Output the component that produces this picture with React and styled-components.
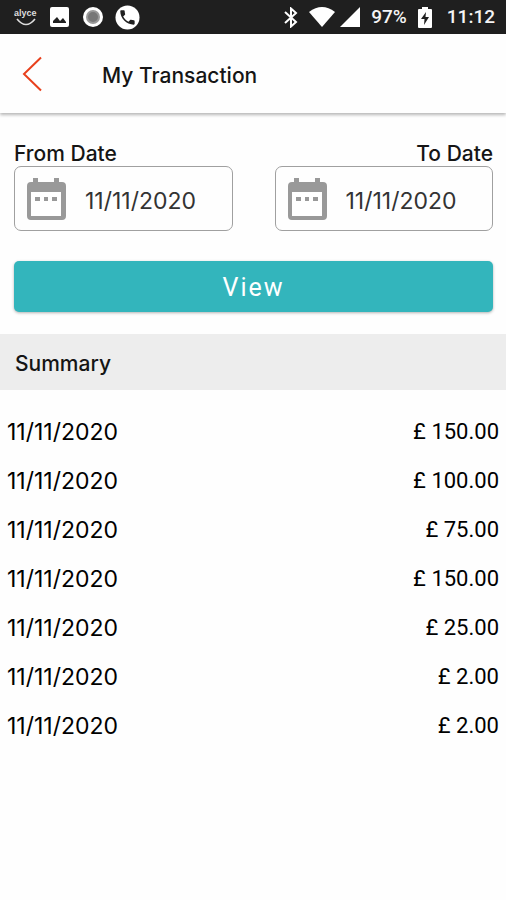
import React from "react";
import styled, { createGlobalStyle } from "styled-components";

const GlobalStyle = createGlobalStyle`
  * { box-sizing: border-box; }
  body { margin: 0; background: #fefefe; color: #151515; font-family: Inter, sans-serif; }
`;

const Screen = styled.div`
  min-height: 100vh;
  background: #fefefe;
`;

const StatusBar = styled.div`
  display: flex;
  align-items: center;
  justify-content: space-between;
  height: 34px;
  padding: 0 11px 0 14px;
  background: #1f1f1f;
  color: #f4f4f4;
  font: 500 19px/34px Roboto, sans-serif;
`;

const StatusGroup = styled.div`
  display: flex;
  align-items: center;
  gap: ${(p) => p.$gap}px;
`;

const Clock = styled.time`
  margin-left: 4px;
`;

const Glyph = styled.svg`
  display: block;
  flex: none;
`;

const Header = styled.header`
  display: flex;
  align-items: center;
  gap: 56px;
  height: 79px;
  padding: 0 20px;
  background: #fefefe;
  box-shadow: 0 2px 3px rgba(0, 0, 0, 0.28);
`;

const BackButton = styled.button`
  padding: 0;
  border: 0;
  background: none;
  cursor: pointer;
`;

const Title = styled.h1`
  margin: 0;
  padding-top: 4px;
  font-size: 21px;
  font-weight: 500;
  line-height: 24px;
`;

const Filters = styled.form`
  display: grid;
  grid-template-columns: 1fr 1fr;
  gap: 30px 42px;
  padding: 28px 13px 22px 14px;
`;

const Field = styled.label`
  display: flex;
  flex-direction: column;
  min-width: 0;
  font-size: 21px;
  font-weight: 500;
  line-height: 25px;
  text-align: ${(p) => p.$align};
`;

const DateBox = styled.span`
  display: flex;
  align-items: center;
  gap: 19px;
  height: 65px;
  padding: 0 12px;
  border: 1px solid #a0a0a0;
  border-radius: 7px;
`;

const DateInput = styled.input`
  flex: 1;
  min-width: 0;
  width: 100%;
  padding: 4px 0 0;
  border: 0;
  outline: 0;
  background: none;
  color: #333;
  font: 400 23px/28px Inter, sans-serif;
`;

const ViewButton = styled.button`
  grid-column: 1 / -1;
  height: 51px;
  padding: 3px 0 0;
  border: 0;
  border-radius: 5px;
  background: #33b5bc;
  box-shadow: 0 1px 3px rgba(0, 0, 0, 0.3);
  color: #fff;
  font: 400 25px/30px Roboto, sans-serif;
  letter-spacing: 2px;
  cursor: pointer;
`;

const SectionTitle = styled.h2`
  margin: 0;
  padding: 18px 15px 14px;
  background: #ededed;
  font-size: 21px;
  font-weight: 500;
  line-height: 24px;
`;

const Transactions = styled.table`
  width: 100%;
  margin-top: 17px;
  border-collapse: collapse;
`;

const Cell = styled.td`
  height: 49px;
  padding: 0 7px;
  color: #000;
  font-weight: 400;
  line-height: 28px;
`;

const DateCell = styled(Cell)`
  font-size: 23px;
  text-align: left;
`;

const AmountCell = styled(Cell)`
  font-family: Roboto, sans-serif;
  font-size: 22px;
  text-align: right;
`;

const rows = ["150.00", "100.00", "75.00", "150.00", "25.00", "2.00", "2.00"];

function CalendarIcon() {
  return (
    <Glyph width="39" height="43" viewBox="0 0 39 43" fill="#999" aria-hidden="true">
      <path d="M6 1h5v4h16V1h5v4h3a4 4 0 0 1 4 4v30a4 4 0 0 1-4 4H4a4 4 0 0 1-4-4V9a4 4 0 0 1 4-4h2z" />
      <path d="M4 15h30v24H4z" fill="#fff" />
      <path d="M8 20h5v4H8zM17 20h4v4h-4zM25 20h5v4h-5z" />
    </Glyph>
  );
}

function DateField({ label, align }) {
  return (
    <Field $align={align}>
      {label}
      <DateBox>
        <CalendarIcon />
        <DateInput type="text" defaultValue="11/11/2020" />
      </DateBox>
    </Field>
  );
}

const SmileText = styled.text`
  font: 700 9px "Liberation Sans", sans-serif;
`;

export default function App() {
  return (
    <Screen>
      <GlobalStyle />
      <StatusBar>
        <StatusGroup $gap={12}>
          <Glyph width="24" height="22" viewBox="0 0 24 22" fill="#ddd">
            <SmileText x="0" y="10">alyce</SmileText>
            <path d="M3 13q9 11 18 0" fill="none" stroke="#ddd" strokeWidth="1.6" />
          </Glyph>
          <Glyph width="19" height="20" viewBox="0 0 19 20">
            <rect width="19" height="20" rx="2" fill="#fff" />
            <path d="M3 16v-2l4-4 3 4 3-3 3 4v1z" fill="#1f1f1f" />
          </Glyph>
          <Glyph width="22" height="22" viewBox="0 0 22 22">
            <circle cx="12" cy="11" r="10" fill="#fff" />
            <circle cx="12" cy="11" r="7" fill="#999" />
            <circle cx="12" cy="11" r="5" fill="#777" />
          </Glyph>
          <Glyph width="25" height="25" viewBox="0 0 26 26">
            <circle cx="13" cy="13" r="12.5" fill="#fff" />
            <path
              transform="translate(3 3) scale(.83)"
              d="M6.6 10.8c1.4 2.8 3.8 5.1 6.6 6.6l2.2-2.2c.3-.3.7-.4 1-.2 1.1.4 2.3.6 3.6.6.6 0 1 .4 1 1V20c0 .6-.4 1-1 1C10.6 21 3 13.4 3 4c0-.6.4-1 1-1h3.5c.6 0 1 .4 1 1 0 1.2.2 2.4.6 3.6.1.3 0 .7-.2 1z"
              fill="#1f1f1f"
            />
          </Glyph>
        </StatusGroup>
        <StatusGroup $gap={11}>
          <Glyph width="14" height="21" viewBox="0 0 14 21" fill="none" stroke="#fff" strokeWidth="2">
            <path d="M1 5l11 10-5 4.500V1.500L12 6 1 16" />
          </Glyph>
          <StatusGroup $gap={5}>
            <Glyph width="26" height="20" viewBox="0 0 26 20" fill="#fff">
              <path d="M0 5Q13-5 26 5L13 20z" />
            </Glyph>
            <Glyph width="20" height="20" viewBox="0 0 20 20" fill="#fff">
              <path d="M20 0v20H0z" />
            </Glyph>
          </StatusGroup>
          <span>97%</span>
          <Glyph width="14" height="21" viewBox="0 0 14 21">
            <path d="M4 0h6v2h3q1 0 1 1v17q0 1-1 1H1q-1 0-1-1V3q0-1 1-1h3z" fill="#fff" />
            <path d="M8 5l-5 7h3.500L6 18l5-8H7.500z" fill="#1f1f1f" />
          </Glyph>
          <Clock>11:12</Clock>
        </StatusGroup>
      </StatusBar>
      <Header>
        <BackButton type="button" aria-label="Back">
          <Glyph width="26" height="38" viewBox="0 0 26 38" fill="none" stroke="#e8401c" strokeWidth="2">
            <path d="M21 2.500L4 19l17 16.500" />
          </Glyph>
        </BackButton>
        <Title>My Transaction</Title>
      </Header>
      <main>
        <Filters onSubmit={(e) => e.preventDefault()}>
          <DateField label="From Date" align="left" />
          <DateField label="To Date" align="right" />
          <ViewButton type="submit">View</ViewButton>
        </Filters>
        <SectionTitle>Summary</SectionTitle>
        <Transactions aria-label="Transactions">
          <tbody>
            {rows.map((amount, i) => (
              <tr key={i}>
                <DateCell>11/11/2020</DateCell>
                <AmountCell>£ {amount}</AmountCell>
              </tr>
            ))}
          </tbody>
        </Transactions>
      </main>
    </Screen>
  );
}
